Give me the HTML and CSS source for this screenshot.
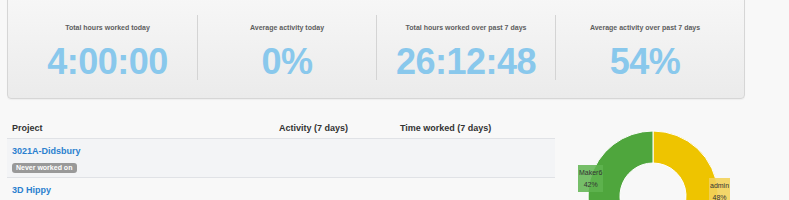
FILE: index.html
```html
<!DOCTYPE html>
<html>
<head>
<meta charset="utf-8">
<link rel="stylesheet" href="styles.css">
</head>
<body>
<div class="page">
  <div class="stats">
    <div class="stat">
      <div class="stat-label">Total hours worked today</div>
      <div class="stat-value">4:00:00</div>
    </div>
    <div class="stat">
      <div class="stat-label">Average activity today</div>
      <div class="stat-value">0%</div>
    </div>
    <div class="stat">
      <div class="stat-label">Total hours worked over past 7 days</div>
      <div class="stat-value">26:12:48</div>
    </div>
    <div class="stat">
      <div class="stat-label">Average activity over past 7 days</div>
      <div class="stat-value">54%</div>
    </div>
  </div>

  <div class="lower">
    <table class="projects">
      <thead>
        <tr>
          <th class="col-project">Project</th>
          <th class="col-activity">Activity (7 days)</th>
          <th class="col-time">Time worked (7 days)</th>
        </tr>
      </thead>
      <tbody>
        <tr class="shaded">
          <td><a class="proj-link" href="#">3021A-Didsbury</a><div class="badge-row"><span class="badge">Never worked on</span></div></td>
          <td></td>
          <td></td>
        </tr>
        <tr>
          <td><a class="proj-link" href="#">3D Hippy</a></td>
          <td></td>
          <td></td>
        </tr>
      </tbody>
    </table>

    <div class="chart">
      <svg class="donut" width="170" height="170" viewBox="0 0 170 170">
        <path d="M83 16 A65 65 0 0 1 91.15 145.49 L87.14 113.74 A33 33 0 0 0 83 48 Z" fill="#eec400" stroke="#fff" stroke-width="1"/>
        <path d="M91.15 145.49 A65 65 0 0 1 51.68 137.96 L67.10 109.92 A33 33 0 0 0 87.14 113.74 Z" fill="#afd8f8" stroke="#fff" stroke-width="1"/>
        <path d="M83 16 A65 65 0 0 0 51.68 137.96 L67.10 109.92 A33 33 0 0 1 83 48 Z" fill="#4fa63d" stroke="#fff" stroke-width="1"/>
      </svg>
      <div class="pie-label pie-green">Maker6<br>42%</div>
      <div class="pie-label pie-yellow">admin<br>48%</div>
    </div>
  </div>
</div>
</body>
</html>
```

FILE: styles.css
```css
html, body {
  margin: 0;
  padding: 0;
  background: #f8f8f8;
  font-family: "Liberation Sans", Arial, Helvetica, sans-serif;
  color: #333;
}

.page {
  width: 789px;
  height: 200px;
  overflow: hidden;
  padding: 0 7px;
  box-sizing: border-box;
}

.stats {
  width: 738px;
  box-sizing: border-box;
  margin-top: -6px;
  padding: 20px 10px 18px;
  border: 1px solid #d6d6d6;
  border-radius: 4px;
  background: linear-gradient(#f7f7f7, #ebebeb);
  box-shadow: 0 1px 1px rgba(0,0,0,0.04);
  display: grid;
  grid-template-columns: repeat(4, 1fr);
}

.stat {
  text-align: center;
  padding-top: 8px;
  height: 65px;
  box-sizing: border-box;
  border-left: 1px solid #d4d4d4;
}

.stat:first-child {
  border-left: none;
}

.stat-label {
  font-size: 7px;
  line-height: 10px;
  font-weight: bold;
  color: #5e5e5e;
}

.stat-value {
  margin-top: 11px;
  font-size: 36px;
  line-height: 36px;
  font-weight: bold;
  color: #89c8ec;
  letter-spacing: -0.5px;
}

.lower {
  display: flex;
  align-items: flex-start;
  margin-top: 16px;
}

.projects {
  width: 548px;
  border-collapse: collapse;
  font-size: 9px;
  flex: none;
}

.projects th {
  text-align: left;
  font-weight: bold;
  color: #333;
  padding: 6px 5px 3px;
  line-height: 14px;
  border-bottom: 1px solid #e0e2e6;
}

.col-project { width: 257px; }
.col-activity { width: 111px; }

.projects td {
  padding: 5px 5px 4px;
  vertical-align: top;
  border-bottom: 1px solid #e0e2e6;
  line-height: 14px;
}

.shaded td {
  background: #f3f4f6;
}

.proj-link {
  display: block;
  color: #2b80cf;
  font-weight: bold;
  text-decoration: none;
}

.badge-row {
  margin-top: 5px;
  height: 10px;
  line-height: 10px;
}

.badge {
  display: inline-block;
  background: #999;
  color: #fff;
  font-size: 7px;
  font-weight: bold;
  line-height: 10px;
  padding: 0 5px 0 4px;
  border-radius: 3px;
  vertical-align: top;
}

.chart {
  position: relative;
  margin-left: 15px;
  width: 170px;
  height: 170px;
  flex: none;
}

.donut {
  display: block;
}

.pie-label {
  position: absolute;
  font-size: 7px;
  line-height: 12px;
  color: #333;
  text-align: center;
  padding: 2px 1px 1px;
}

.pie-green {
  left: 8px;
  top: 50px;
  background: rgba(95, 180, 80, 0.85);
}

.pie-yellow {
  left: 139px;
  top: 63px;
  background: rgba(242, 210, 90, 0.9);
}
```
